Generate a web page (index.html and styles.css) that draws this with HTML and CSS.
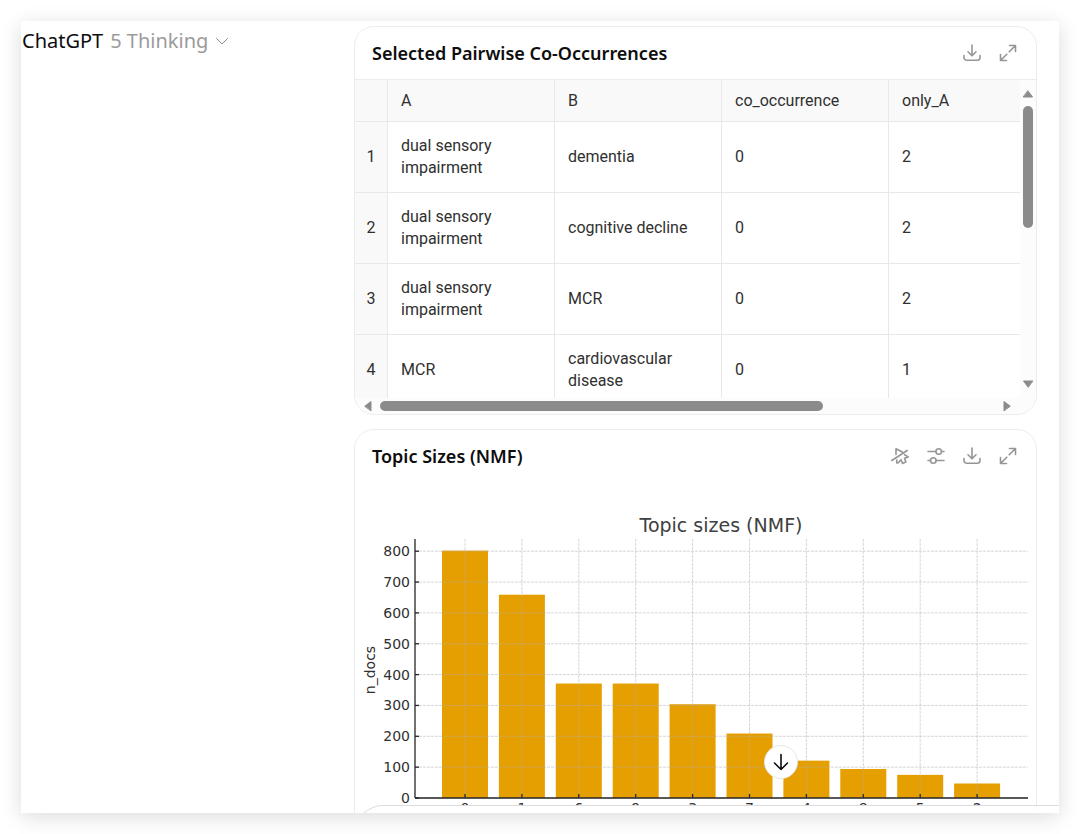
FILE: index.html
```html
<!DOCTYPE html>
<html lang="en">
<head>
    <meta charset="UTF-8">
    <meta name="viewport" content="width=device-width, initial-scale=1">
    <title>ChatGPT</title>

    <link rel="stylesheet" href="styles.css">
</head>
<body>
<svg class="sprite" aria-hidden="true">
    <symbol id="icon-download" viewBox="0 0 20 20">
        <path d="M10 2v10.500M6 8.800l4 4 4-4M2 12.500v2a2.800 2.800 0 0 0 2.800 2.800h10.400a2.800 2.800 0 0 0 2.800-2.800v-2"/>
    </symbol>
    <symbol id="icon-expand" viewBox="0 0 20 20">
        <path d="M11.500 2.500h6v6M17.500 2.500l-6.300 6.300M8.500 17.500h-6v-6M2.500 17.500l6.300-6.300"/>
    </symbol>
    <symbol id="icon-sliders" viewBox="0 0 20 20">
        <path d="M2 5.500h8M15.500 5.500h2.500M2 14.500h2.500M10 14.500h8"/>
        <circle cx="12.700" cy="5.500" r="2.800"/>
        <circle cx="7.300" cy="14.500" r="2.800"/>
    </symbol>
    <symbol id="icon-static" viewBox="0 0 20 20">
        <path d="M1.800 14.500L17.200 4.500M6 8.500V2.700l6.300 3.300M14.600 8.700l3.600 2.200-3.700 1.300 1.400 3.900-3.400 1.300-1.500-3.700-2.600 3.100-1.600.2v-3"/>
    </symbol>
</svg>

<div class="app">
    <header class="topbar">
        <button class="model-switch">
            <span>ChatGPT</span>
            <span class="model-name">5 Thinking</span>
            <svg class="chevron" viewBox="0 0 14 14" aria-hidden="true"><path d="M1.500 4.500L7 10l5.500-5.500"/></svg>
        </button>
    </header>

    <main class="thread">
        <section class="card">
            <div class="card-header">
                <h2>Selected Pairwise Co-Occurrences</h2>
                <div class="actions">
                    <button class="icon-button" aria-label="Download table"><svg><use href="#icon-download"/></svg></button>
                    <button class="icon-button" aria-label="Expand table"><svg><use href="#icon-expand"/></svg></button>
                </div>
            </div>
            <div class="grid-view">
                <div class="table-clip">
                    <table>
                        <colgroup>
                            <col class="col-index">
                            <col class="col-data">
                            <col class="col-data">
                            <col class="col-data">
                            <col class="col-data">
                        </colgroup>
                        <thead>
                            <tr><th></th><th>A</th><th>B</th><th>co_occurrence</th><th>only_A</th></tr>
                        </thead>
                        <tbody>
                            <tr><th>1</th><td>dual sensory impairment</td><td>dementia</td><td>0</td><td>2</td></tr>
                            <tr><th>2</th><td>dual sensory impairment</td><td>cognitive decline</td><td>0</td><td>2</td></tr>
                            <tr><th>3</th><td>dual sensory impairment</td><td>MCR</td><td>0</td><td>2</td></tr>
                            <tr><th>4</th><td>MCR</td><td>cardiovascular disease</td><td>0</td><td>1</td></tr>
                        </tbody>
                    </table>
                </div>
                <div class="scrollbar vertical">
                    <svg class="arrow" viewBox="0 0 12 12"><path d="M6 3l4.500 6h-9z"/></svg>
                    <div class="track"><div class="thumb"></div></div>
                    <svg class="arrow" viewBox="0 0 12 12"><path d="M6 9L1.500 3h9z"/></svg>
                </div>
                <div class="scrollbar horizontal">
                    <svg class="arrow" viewBox="0 0 12 12"><path d="M3 6l6-4.500v9z"/></svg>
                    <div class="track"><div class="thumb"></div></div>
                    <svg class="arrow" viewBox="0 0 12 12"><path d="M9 6L3 1.500v9z"/></svg>
                </div>
            </div>
        </section>

        <section class="card">
            <div class="card-header">
                <h2>Topic Sizes (NMF)</h2>
                <div class="actions">
                    <button class="icon-button" aria-label="Switch to static chart"><svg><use href="#icon-static"/></svg></button>
                    <button class="icon-button" aria-label="Chart options"><svg><use href="#icon-sliders"/></svg></button>
                    <button class="icon-button" aria-label="Download chart"><svg><use href="#icon-download"/></svg></button>
                    <button class="icon-button" aria-label="Expand chart"><svg><use href="#icon-expand"/></svg></button>
                </div>
            </div>
            <svg class="chart" id="chart" viewBox="0 0 681 350" role="img" aria-label="Topic sizes (NMF)">
                <text class="chart-title" x="366" y="50" text-anchor="middle">Topic sizes (NMF)</text>
                <text class="axis-label" transform="translate(20 188) rotate(-90)" text-anchor="middle">n_docs</text>
            </svg>
        </section>
    </main>

    <div class="composer"></div>
    <button class="scroll-down" aria-label="Scroll to bottom">
        <svg viewBox="0 0 20 20" aria-hidden="true"><path d="M10 2.500v15M3.500 11l6.500 6.500 6.500-6.500"/></svg>
    </button>
</div>

<script src="chart.js"></script>
</body>
</html>
```
FILE: styles.css
```css
* {
    box-sizing: border-box;
}

body {
    margin: 0;
    padding: 21px;
    height: 100vh;
    background: #fff;
    color: #0d0d0d;
    font-family: "Noto Sans", "Open Sans", sans-serif;
}

button {
    padding: 0;
    border: 0;
    background: none;
    color: inherit;
    font: inherit;
    cursor: pointer;
}

svg {
    fill: none;
    stroke: currentColor;
    stroke-linecap: round;
    stroke-linejoin: round;
}

.sprite {
    display: none;
}

.app {
    position: relative;
    display: grid;
    grid-template-columns: 333px 1fr;
    height: 100%;
    overflow: hidden;
    background: #fff;
}

body::before {
    content: "";
    position: absolute;
    inset: 21px;
    box-shadow: 0 4px 20px rgba(0, 0, 0, .14);
}

.topbar {
    padding: 6px 1px;
}

.model-switch {
    display: flex;
    align-items: center;
    gap: 7px;
    font-size: 20px;
    line-height: 28px;
}

.model-name {
    color: #9b9b9b;
}

.chevron {
    width: 14px;
    height: 14px;
    color: #8f8f8f;
}

.thread {
    display: flex;
    flex-direction: column;
    gap: 14px;
    padding: 5px 22px 0 0;
    min-width: 0;
}

.card {
    flex: none;
    border: 1px solid #ececec;
    border-radius: 20px;
    overflow: hidden;
    background: #fff;
}

.card-header {
    display: flex;
    align-items: center;
    justify-content: space-between;
    height: 52px;
    padding: 0 18px 0 17px;
}

.card-header h2 {
    margin: 0;
    font-size: 18px;
    font-weight: 600;
    line-height: 24px;
}

.actions {
    display: flex;
    gap: 16px;
}

.icon-button {
    display: flex;
    width: 20px;
    height: 20px;
    color: #969696;
}

.icon-button svg {
    width: 20px;
    height: 20px;
    stroke-width: 1.600;
}

.grid-view {
    display: grid;
    grid-template-columns: 1fr 16px;
    grid-template-rows: 318px 16px;
    border-top: 1px solid #ececec;
    background: #fcfcfc;
}

.table-clip {
    overflow: hidden;
    background: #fff;
}

table {
    width: 100%;
    min-width: 701px;
    table-layout: fixed;
    border-collapse: separate;
    border-spacing: 0;
    color: #303030;
    font: 16px/22px Roboto, sans-serif;
}

.col-index {
    width: 33px;
}

th, td {
    height: 71px;
    padding: 0 13px;
    border-right: 1px solid #e8e8ea;
    border-bottom: 1px solid #e8e8ea;
    font-weight: 400;
    text-align: left;
}

thead th {
    height: 42px;
    background: #f9f9f9;
}

tbody th {
    padding: 0;
    background: #f9f9f9;
    text-align: center;
}

.scrollbar {
    display: flex;
    align-items: center;
    gap: 6px;
    color: #8b8b8b;
}

.scrollbar.vertical {
    flex-direction: column;
    padding: 8px 0;
}

.scrollbar.horizontal {
    padding: 0 7px;
}

.arrow {
    flex: none;
    width: 12px;
    height: 12px;
    fill: currentColor;
}

.track {
    flex: 1;
}

.thumb {
    border-radius: 5px;
    background: #8b8b8b;
}

.vertical .thumb {
    width: 10px;
    height: 46%;
}

.horizontal .thumb {
    width: 72%;
    height: 10px;
}

.chart {
    display: block;
    width: 100%;
    stroke: none;
    font-family: "DejaVu Sans", sans-serif;
}

.chart-title {
    fill: #404040;
    font-size: 19px;
}

.axis-label, .tick-label {
    fill: #303030;
    font-size: 14px;
}

.bar {
    fill: #e69f00;
}

.grid-line {
    stroke: #b0b0b0;
    stroke-dasharray: 3 1;
    stroke-linecap: butt;
    stroke-opacity: .5;
}

.axis {
    stroke: #262626;
    stroke-width: 1.300;
    stroke-linecap: butt;
}

.composer {
    position: absolute;
    right: -30px;
    bottom: -48px;
    left: 334px;
    height: 56px;
    border: 1px solid #dcdcdc;
    border-radius: 28px;
    background: #fff;
}

.scroll-down {
    position: absolute;
    right: 261px;
    bottom: 34px;
    display: flex;
    align-items: center;
    justify-content: center;
    width: 34px;
    height: 34px;
    border: 1px solid #e6e6e6;
    border-radius: 50%;
    background: #fff;
}

.scroll-down svg {
    width: 20px;
    height: 20px;
    stroke-width: 1.600;
}
```
FILE: chart.js
```javascript
const topics = [
    {id: 0, docs: 802},
    {id: 1, docs: 659},
    {id: 6, docs: 371},
    {id: 9, docs: 371},
    {id: 3, docs: 304},
    {id: 7, docs: 209},
    {id: 4, docs: 121},
    {id: 8, docs: 94},
    {id: 5, docs: 75},
    {id: 2, docs: 47},
];

const chart = document.querySelector('#chart');

// plot area inside the viewBox
const plot = {left: 60, right: 673, top: 57, bottom: 316};
const first = 110;
const step = 56.9;
const barWidth = 46;

const toY = (docs) => plot.bottom - docs * 0.3085;

const add = (name, attrs, text = '') => {
    const node = document.createElementNS('http://www.w3.org/2000/svg', name);
    Object.entries(attrs).forEach(([key, value]) => node.setAttribute(key, value));
    node.textContent = text;
    chart.appendChild(node);
};

const line = (cls, x1, y1, x2, y2) => add('line', {class: cls, x1, y1, x2, y2});

topics.forEach(({docs}, i) => {
    const y = toY(docs);
    add('rect', {class: 'bar', x: first + i * step - barWidth / 2, y, width: barWidth, height: plot.bottom - y});
});

topics.forEach(({id}, i) => {
    const x = first + i * step;
    line('grid-line', x, plot.bottom, x, plot.top);
    line('axis', x, plot.bottom, x, plot.bottom - 4);
    add('text', {class: 'tick-label', x, y: plot.bottom + 15, 'text-anchor': 'middle'}, id);
});

for (let docs = 0; docs <= 800; docs += 100) {
    const y = toY(docs);
    line('grid-line', plot.left, y, plot.right, y);
    line('axis', plot.left, y, plot.left + 4, y);
    add('text', {class: 'tick-label', x: plot.left - 5, y: y + 5, 'text-anchor': 'end'}, docs);
}

line('axis', plot.left, plot.top, plot.left, plot.bottom);
line('axis', plot.left, plot.bottom, plot.right, plot.bottom);
```
